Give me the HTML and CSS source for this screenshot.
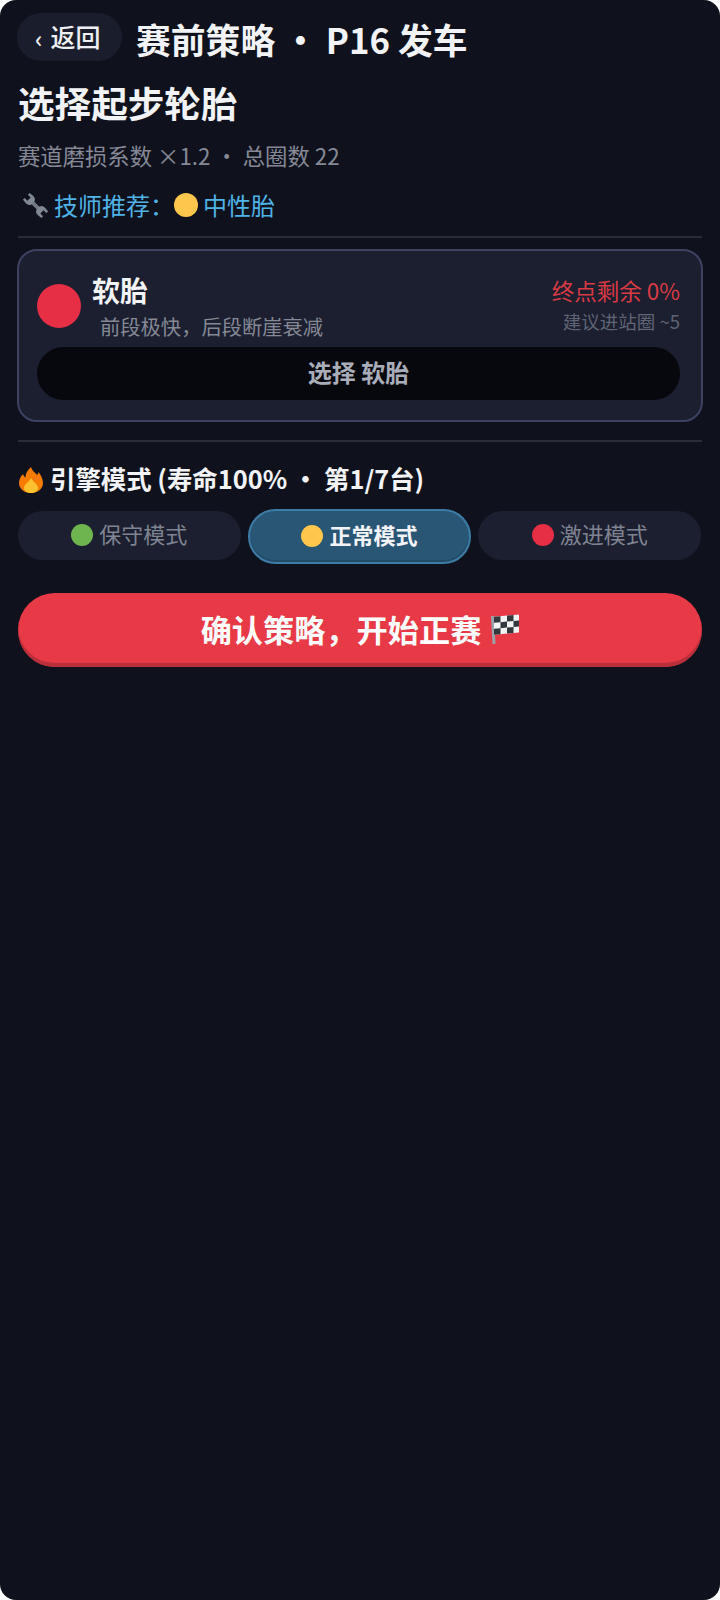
FILE: index.html
```html
<!DOCTYPE html>
<html lang="zh-CN">
  <head>
    <meta charset="UTF-8" />
    <meta name="viewport" content="width=device-width, initial-scale=1.0" />
    <title>赛前策略</title>
    <link rel="stylesheet" href="styles.css">
  </head>
  <body>
    <div class="screen">
      <div class="topbar">
        <button class="back"><span class="chev">‹</span><span>返回</span></button>
        <h1 class="page-title">赛前策略 · P16 发车</h1>
      </div>

      <h2 class="heading">选择起步轮胎</h2>
      <p class="meta">赛道磨损系数 ×1.2 · 总圈数 22</p>

      <p class="advice">
        <svg class="wrench" viewBox="0 0 24 24" width="25" height="25">
          <g transform="rotate(-45 12 12)" fill="#7f8893">
            <rect x="10.200" y="7" width="3.600" height="10" fill="#6f7883"/>
            <path d="M7.500 -0.500H9.800V3.200H14.200V-0.500H16.500L17 4Q17 7.500 14 8.500H10Q7 7.500 7 4Z"/>
            <path d="M7.500 24.500H9.800V20.800H14.200V24.500H16.500L17 20Q17 16.500 14 15.500H10Q7 16.500 7 20Z"/>
          </g>
        </svg>
        <span>技师推荐：</span><i class="dot dot-yellow"></i><span>中性胎</span>
      </p>

      <hr class="rule" />

      <div class="tyre-card">
        <div class="tyre-info">
          <i class="tyre-dot"></i>
          <div class="tyre-text">
            <div class="tyre-name">软胎</div>
            <div class="tyre-desc">前段极快，后段断崖衰减</div>
          </div>
          <div class="tyre-stats">
            <div class="tyre-left">终点剩余 0%</div>
            <div class="tyre-pit">建议进站圈 ~5</div>
          </div>
        </div>
        <button class="tyre-pick">选择 软胎</button>
      </div>

      <hr class="rule" />

      <h3 class="engine-title">
        <svg class="flame" viewBox="0 0 24 26" width="26" height="26">
          <path d="M12 0C13 4 16 5 18 8C19 7 19.500 6 19.500 5C22 8 24 12 24 16C24 22 18.500 26 12 26C5.500 26 0 22 0 16C0 12 2 9 4 7C4.500 9 5.500 10 6.500 10.500C6.500 6 9 3 12 0Z" fill="#f57c00"/>
          <path d="M12.500 11C13 14.500 19 17 19 21C19 24 16 26 12 26C8 26 5 24 5 21C5 17.500 9 15.500 12.500 11Z" fill="#fdc02f"/>
        </svg>
        <span>引擎模式 (寿命100% · 第1/7台)</span>
      </h3>

      <div class="modes">
        <button class="mode"><i class="dot dot-green"></i>保守模式</button>
        <button class="mode mode-on"><i class="dot dot-yellow"></i>正常模式</button>
        <button class="mode"><i class="dot dot-red"></i>激进模式</button>
      </div>

      <button class="confirm">
        <span>确认策略，开始正赛</span>
        <svg class="flag" viewBox="0 0 28 31" width="28" height="31">
          <path d="M0 3L2.800 3L4.500 31L1.500 31Z" fill="#9aa3ab"/>
          <g transform="skewY(-5)">
            <rect x="3" y="4" width="25" height="18" fill="#f2f3f4"/>
            <path d="M3 4h6.500v6H3zM16 4h6.500v6H16zM9.500 10H16v6H9.500zM22.500 10H28v6h-5.500zM3 16h6.500v6H3zM16 16h6.500v6H16z" fill="#33373e"/>
          </g>
        </svg>
      </button>
    </div>
  </body>
</html>
```

FILE: styles.css
```css
* {
  box-sizing: border-box;
}

html,
body {
  margin: 0;
  padding: 0;
  background-color: #fff;
}

body {
  font-family: "Noto Sans CJK SC", "Noto Sans", sans-serif;
}

.screen {
  width: 720px;
  height: 1600px;
  padding: 13px 18px 0;
  background-color: #0f121c;
  border-radius: 16px;
  color: #f2f3f7;
}

button {
  font-family: inherit;
  border: none;
  padding: 0;
}

.topbar {
  display: flex;
  align-items: flex-start;
  gap: 14px;
  margin-left: -1px;
}

.back {
  display: flex;
  align-items: center;
  gap: 8px;
  width: 105px;
  height: 48px;
  padding: 0 0 2px 18px;
  border-radius: 24px;
  background-color: #1a1e2c;
  color: #eef0f4;
  font-size: 25px;
  font-weight: 500;
}

.chev {
  margin-top: 2px;
  font-size: 24px;
}

.page-title {
  margin: 0;
  font-size: 34.800px;
  font-weight: 700;
  line-height: 52px;
}

.heading {
  margin: 13px 0 0;
  font-size: 36.600px;
  font-weight: 700;
  line-height: 50px;
}

.meta {
  margin: 11px 0 0;
  font-size: 22.350px;
  line-height: 32px;
  color: #858996;
}

.advice {
  margin: 17px 0 0 5px;
  display: flex;
  align-items: center;
  font-size: 24px;
  line-height: 34px;
  color: #4fb3e8;
}

.wrench {
  flex: none;
  margin-right: 6px;
}

.dot {
  display: inline-block;
  width: 22px;
  height: 22px;
  border-radius: 50%;
  flex: none;
}

.advice .dot {
  width: 24px;
  height: 24px;
  margin-right: 5px;
}

.dot-yellow {
  background-color: #ffc64d;
}

.dot-green {
  background-color: #6fb54f;
}

.dot-red {
  background-color: #e62e45;
}

.rule {
  margin: 14px 0 11px;
  height: 2px;
  border: none;
  background-color: #2a2d38;
}

.tyre-card {
  height: 173px;
  margin: 0 -1px 18px;
  padding: 21px 21px 0 18px;
  border: 2px solid #3d4263;
  border-radius: 20px;
  background-color: #1b1f2f;
}

.tyre-info {
  display: flex;
  align-items: flex-start;
}

.tyre-dot {
  width: 44px;
  height: 44px;
  margin-top: 12px;
  border-radius: 50%;
  background-color: #e62e45;
  flex: none;
}

.tyre-text {
  margin-left: 11px;
  flex: 1;
}

.tyre-name {
  font-size: 28px;
  font-weight: 700;
  line-height: 36px;
}

.tyre-desc {
  margin: 4px 0 0 8px;
  font-size: 20.300px;
  line-height: 28px;
  color: #858996;
}

.tyre-stats {
  text-align: right;
}

.tyre-left {
  font-size: 22.500px;
  line-height: 36px;
  color: #d93a44;
}

.tyre-pit {
  font-size: 18.500px;
  line-height: 26px;
  color: #5f6475;
}

.tyre-pick {
  display: block;
  width: 100%;
  height: 53px;
  margin-top: 7px;
  padding-bottom: 4px;
  border-radius: 27px;
  background-color: #07080d;
  color: #a9adba;
  font-size: 24px;
  font-weight: 700;
}

.engine-title {
  margin: 18px 0 0;
  display: flex;
  align-items: center;
  gap: 6px;
  font-size: 25.400px;
  font-weight: 700;
  line-height: 36px;
}

.flame {
  flex: none;
  margin-top: 4px;
}

.modes {
  display: grid;
  grid-template-columns: repeat(3, 1fr);
  gap: 7.500px;
  width: 683px;
  margin-top: 13px;
  height: 55px;
}

.mode {
  height: 49px;
  margin-top: 2px;
  padding-bottom: 6px;
  border-radius: 25px;
  background-color: #1b1f2f;
  color: #7f8392;
  font-size: 22px;
  display: flex;
  align-items: center;
  justify-content: center;
  gap: 6px;
}

.mode .dot {
  margin-top: 4px;
}

.mode-on {
  height: 55px;
  margin-top: 0;
  border-radius: 28px;
  border: 2px solid #3d7ca6;
  background-color: #2a5675;
  box-shadow: inset 0 -2px 0 #234a66;
  color: #f2f3f7;
  font-weight: 700;
}

.confirm {
  display: flex;
  align-items: center;
  justify-content: center;
  gap: 10px;
  width: 100%;
  height: 74px;
  margin-top: 29px;
  padding-bottom: 4px;
  border-radius: 37px;
  background-color: #e83a46;
  box-shadow: inset 0 -4px 0 #b92f3a;
  color: #fff;
  font-size: 31.200px;
  font-weight: 700;
}

.flag {
  flex: none;
}
```
